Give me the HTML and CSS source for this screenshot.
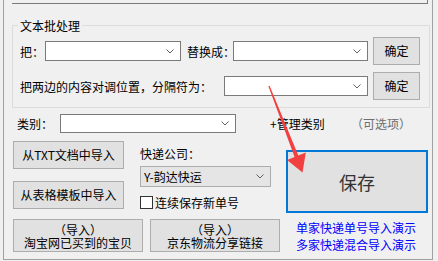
FILE: index.html
```html
<!DOCTYPE html>
<html lang="zh-CN">
<head>
  <meta charset="UTF-8">
  <title>快递单号导入</title>
  <link rel="stylesheet" href="styles.css">
</head>
<body>
  <div class="frame">
    <div class="topbox"></div>

    <div class="group">
      <span class="group-title">文本批处理</span>
      <div class="row">
        <span class="lbl lbl-ba">把：</span>
        <div class="combo combo-a"><svg class="chev" width="8" height="5" viewBox="0 0 8 5"><polyline points="0.5,0.5 4,4 7.5,0.5"/></svg></div>
        <span class="lbl lbl-th">替换成：</span>
        <div class="combo combo-b"><svg class="chev" width="8" height="5" viewBox="0 0 8 5"><polyline points="0.5,0.5 4,4 7.5,0.5"/></svg></div>
        <button class="btn btn-ok">确定</button>
      </div>
      <div class="row row-second">
        <span class="lbl lbl-swap">把两边的内容对调位置，分隔符为：</span>
        <div class="combo combo-c"><svg class="chev" width="8" height="5" viewBox="0 0 8 5"><polyline points="0.5,0.5 4,4 7.5,0.5"/></svg></div>
        <button class="btn btn-ok">确定</button>
      </div>
    </div>

    <div class="cat-row">
      <span class="lbl lbl-cat">类别：</span>
      <div class="combo combo-cat"><svg class="chev" width="8" height="5" viewBox="0 0 8 5"><polyline points="0.5,0.5 4,4 7.5,0.5"/></svg></div>
      <span class="manage">+管理类别</span>
      <span class="hint">（可选项）</span>
    </div>

    <div class="mid-row">
      <div class="col-import">
        <button class="btn btn-import">从TXT文档中导入</button>
        <button class="btn btn-import">从表格模板中导入</button>
      </div>
      <div class="col-express">
        <div class="lbl-express">快递公司：</div>
        <div class="combo combo-express"><span>Y-韵达快运</span><svg class="chev" width="8" height="5" viewBox="0 0 8 5"><polyline points="0.5,0.5 4,4 7.5,0.5"/></svg></div>
        <label class="check"><span class="box"></span>连续保存新单号</label>
      </div>
      <button class="btn btn-save">保存</button>
    </div>

    <div class="bottom-row">
      <button class="btn btn-two">（导入）<br>淘宝网已买到的宝贝</button>
      <button class="btn btn-two btn-jd">（导入）<br>京东物流分享链接</button>
      <div class="links">
        <a href="#">单家快递单号导入演示</a>
        <a href="#">多家快递混合导入演示</a>
      </div>
    </div>
  </div>

  <!-- red arrow pointing at the save button -->
  <svg class="arrow" width="438" height="261" viewBox="0 0 438 261">
    <polygon points="269.6,85.8 298.3,155.5 305.8,152.6 302.5,172.5 287.1,159.9 294.6,157 268.4,86.2"/>
  </svg>
</body>
</html>
```

FILE: styles.css
```css
body {
  margin: 0;
  width: 438px;
  height: 261px;
  overflow: hidden;
  position: relative;
  background-color: #f0f0f0;
  font-family: "Noto Sans CJK SC", "Liberation Sans", sans-serif;
  font-size: 12px;
  color: #000;
}

.frame {
  margin-left: 3px;
  width: 428px;
  border-left: 1px solid #a0a0a0;
  border-right: 1px solid #a0a0a0;
  border-bottom: 1px solid #a0a0a0;
  padding-bottom: 6px;
}

.topbox {
  margin-left: 8px;
  width: 415px;
  height: 3px;
  border-right: 1px solid #7a7a7a;
  border-bottom: 1px solid #7a7a7a;
}

.group {
  position: relative;
  box-sizing: border-box;
  margin: 21px 0 0 8px;
  width: 418px;
  border: 1px solid #dcdcdc;
  padding: 11px 0 7px 7px;
}

.group-title {
  position: absolute;
  left: 5px;
  top: -7px;
  padding: 0 2px;
  line-height: 14px;
  background-color: #f0f0f0;
}

.row {
  display: flex;
  align-items: center;
  height: 28px;
}

.row-second {
  margin-top: 7px;
}

.lbl {
  white-space: nowrap;
}

.lbl-ba {
  width: 25px;
}

.lbl-th {
  margin-left: 6px;
  width: 46px;
}

.lbl-swap {
  width: 204px;
}

.combo {
  box-sizing: border-box;
  display: flex;
  align-items: center;
  justify-content: flex-end;
  height: 20px;
  padding-right: 6px;
  background-color: #fff;
  border: 1px solid #7a7a7a;
}

.chev polyline {
  fill: none;
  stroke: #606060;
  stroke-width: 1;
}

.combo-a {
  width: 136px;
}

.combo-b {
  width: 135px;
}

.combo-c {
  width: 144px;
}

.btn {
  box-sizing: border-box;
  padding: 0;
  background-color: #e1e1e1;
  border: 1px solid #adadad;
  font-family: inherit;
  font-size: 12px;
  line-height: 14px;
  color: #000;
  white-space: nowrap;
}

.btn-ok {
  margin-left: 5px;
  width: 47px;
  height: 28px;
}

.cat-row {
  display: flex;
  align-items: center;
  margin-top: 6px;
  height: 19px;
  padding-left: 13px;
}

.lbl-cat {
  width: 43px;
}

.combo-cat {
  width: 176px;
  height: 19px;
}

.manage {
  margin-left: 34px;
  width: 81px;
}

.hint {
  color: #6d6d6d;
}

.mid-row {
  display: flex;
  align-items: flex-start;
  margin-top: 8px;
}

.col-import {
  display: flex;
  flex-direction: column;
  gap: 12px;
  margin-left: 9px;
  width: 111px;
}

.btn-import {
  height: 28px;
}

.col-express {
  margin-left: 16px;
  width: 131px;
}

.lbl-express {
  margin-top: 4px;
  line-height: 18px;
}

.combo-express {
  justify-content: space-between;
  margin-top: 3px;
  height: 21px;
  padding-left: 3px;
  background-color: #e5e5e5;
  border-color: #adadad;
}

.check {
  display: flex;
  align-items: center;
  gap: 2px;
  margin-top: 9px;
  height: 13px;
}

.box {
  box-sizing: border-box;
  width: 13px;
  height: 13px;
  background-color: #fff;
  border: 1px solid #333;
}

.btn-save {
  margin-left: 15px;
  margin-top: 9px;
  width: 142px;
  height: 63px;
  border: 2px solid #0078d7;
  font-size: 18px;
  color: #333;
}

.bottom-row {
  display: flex;
  align-items: flex-start;
  margin-top: 6px;
}

.btn-two {
  margin-left: 9px;
  width: 130px;
  height: 33px;
  line-height: 13px;
}

.btn-jd {
  margin-left: 7px;
}

.links {
  display: flex;
  flex-direction: column;
  margin-left: 16px;
  line-height: 17px;
}

.links a {
  color: #0000ff;
  text-decoration: none;
}

.arrow {
  position: absolute;
  left: 0;
  top: 0;
  pointer-events: none;
}

.arrow polygon {
  fill: #f23f3f;
}
```
